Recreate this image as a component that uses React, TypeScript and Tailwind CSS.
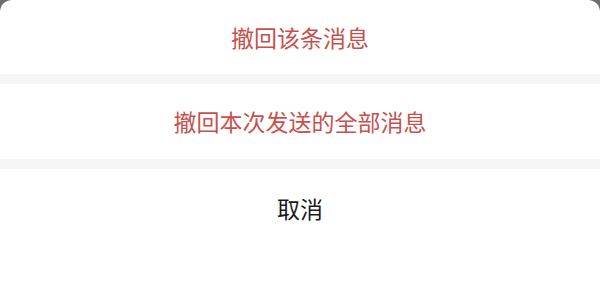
import React from "react";

export default function App() {
  const font = { fontFamily: '"Noto Sans CJK SC", "Noto Sans", sans-serif' };
  return (
    <div className="w-[600px] h-[295px] bg-[#6e6e6e] overflow-hidden" style={font}>
      <div className="flex flex-col h-full bg-white rounded-t-[12px] overflow-hidden">
        <div className="h-[74px] flex items-center justify-center text-[23px] text-[#c8504c] leading-none">
          撤回该条消息
        </div>
        <div className="h-[10px] bg-[#f6f6f6]" />
        <div className="h-[75px] flex items-center justify-center text-[23px] text-[#c8504c] leading-none">
          撤回本次发送的全部消息
        </div>
        <div className="h-[10px] bg-[#f6f6f6]" />
        <div className="h-[78px] flex items-center justify-center text-[23px] text-[#1a1a1a] leading-none">
          取消
        </div>
        <div className="flex-1 bg-white" />
      </div>
    </div>
  );
}
